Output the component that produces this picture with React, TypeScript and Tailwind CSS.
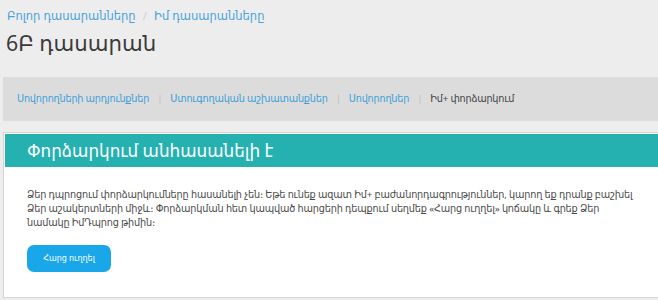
import React from "react";

export default function App() {
  const font = { fontFamily: '"Noto Sans", "DejaVu Sans", sans-serif' };
  return (
    <div className="w-[658px] h-[300px] overflow-hidden bg-[#ededed]" style={font}>
      <div className="pl-[3px] pt-[9px]">
        <div className="pl-[4px] text-[11.5px] leading-[14px] text-[#4aa3dc] flex items-center">
          <span>Բոլոր դասարանները</span>
          <span className="mx-[7px] text-[#cfcfcf]">/</span>
          <span>Իմ դասարանները</span>
        </div>
        <h1 className="pl-[3px] mt-[5px] text-[21.3px] leading-[30px] text-[#3a3a3a]">6Բ դասարան</h1>
        <div className="mt-[19px] h-[44px] bg-[#dcdcdc] flex items-center pl-[14px] text-[9.7px] tracking-[-0.2px] text-[#3d9fd9]">
          <span>Սովորողների արդյունքներ</span>
          <span className="mx-[8px] text-[#bdbdbd]">|</span>
          <span>Ստուգողական աշխատանքներ</span>
          <span className="mx-[8px] text-[#bdbdbd]">|</span>
          <span>Սովորողներ</span>
          <span className="mx-[8px] text-[#bdbdbd]">|</span>
          <span className="text-[#444]">Իմ+ փորձարկում</span>
        </div>
        <div className="mt-[11px] w-[700px] h-[166px] bg-white border border-[#d6d6d6] pt-[1px] pl-[1px]">
          <div className="h-[33px] bg-[#26b1b1] flex items-center pl-[22px] text-[16.8px] text-white">
            Փորձարկում անհասանելի է
          </div>
          <div className="pl-[22px] pt-[21px] w-[660px] text-[9.7px] tracking-[-0.16px] leading-[14px] text-[#4a4a4a] whitespace-nowrap">
            Ձեր դպրոցում փորձարկումները հասանելի չեն։ Եթե ունեք ազատ Իմ+ բաժանորդագրություններ, կարող եք դրանք բաշխել
            <br />
            Ձեր աշակերտների միջև։ Փորձարկման հետ կապված հարցերի դեպքում սեղմեք «Հարց ուղղել» կոճակը և գրեք Ձեր
            <br />
            նամակը ԻմԴպրոց թիմին։
          </div>
          <div className="pl-[22px] mt-[13px]">
            <button className="w-[84px] h-[27px] rounded-[7px] bg-[#1aa7ea] text-white text-[8px]">Հարց ուղղել</button>
          </div>
        </div>
      </div>
    </div>
  );
}
